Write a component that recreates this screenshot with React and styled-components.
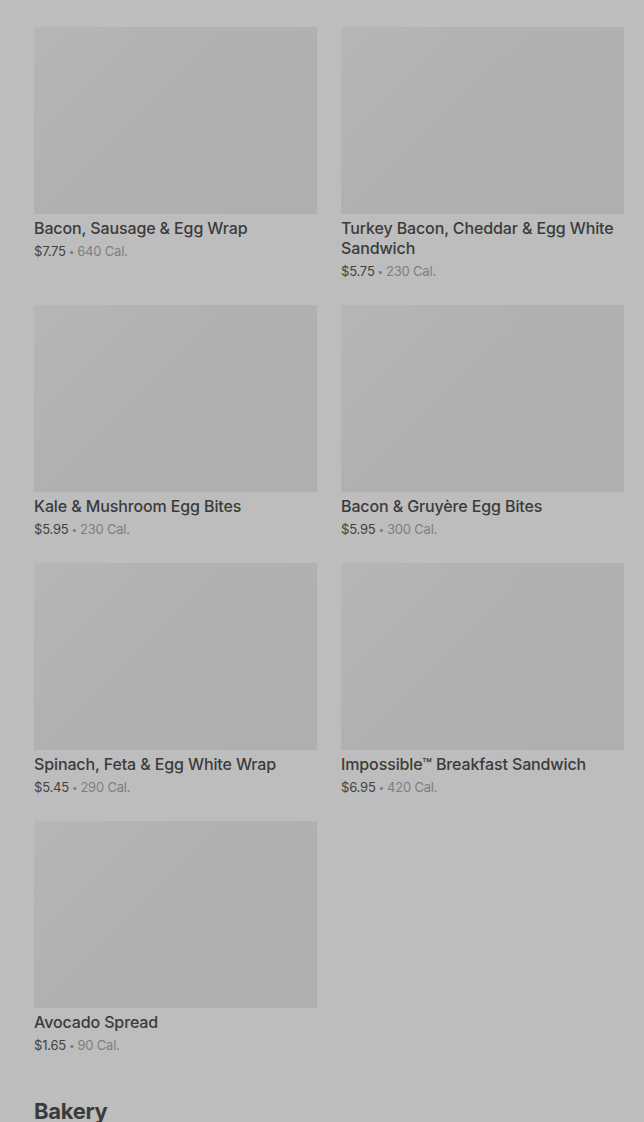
import React from "react";
import styled, { createGlobalStyle } from "styled-components";

const items = [
  { name: "Bacon, Sausage & Egg Wrap", price: "$7.75", cal: "640 Cal." },
  { name: "Turkey Bacon, Cheddar & Egg White Sandwich", price: "$5.75", cal: "230 Cal." },
  { name: "Kale & Mushroom Egg Bites", price: "$5.95", cal: "230 Cal." },
  { name: "Bacon & Gruyère Egg Bites", price: "$5.95", cal: "300 Cal." },
  { name: "Spinach, Feta & Egg White Wrap", price: "$5.45", cal: "290 Cal." },
  { name: "Impossible™ Breakfast Sandwich", price: "$6.95", cal: "420 Cal." },
  { name: "Avocado Spread", price: "$1.65", cal: "90 Cal." },
];

function App() {
  return (
    <Page>
      <GlobalStyle />
      <Grid>
        {items.map((item) => (
          <Card key={item.name}>
            <Thumb />
            <Title>{item.name}</Title>
            <Meta>
              <Price>{item.price}</Price>
              <Dot>•</Dot>
              <Cal>{item.cal}</Cal>
            </Meta>
          </Card>
        ))}
      </Grid>
      <Section>Bakery</Section>
    </Page>
  );
}

const GlobalStyle = createGlobalStyle`
  body {
    margin: 0;
    background: #bdbdbd;
    font-family: Inter, "Liberation Sans", sans-serif;
    overflow: hidden;
  }
`;

const Page = styled.div`
  height: 1122px;
  padding: 27px 20px 0 34px;
  box-sizing: border-box;
  background: #bdbdbd;
`;

const Grid = styled.div`
  display: grid;
  grid-template-columns: 283px 283px;
  column-gap: 24px;
  row-gap: 24px;
  align-items: start;
`;

const Card = styled.div`
  display: flex;
  flex-direction: column;
`;

const Thumb = styled.div`
  height: 187px;
  background: linear-gradient(135deg, #b6b6b6 0%, #b1b1b1 40%, #afafaf 100%);
`;

const Title = styled.div`
  margin-top: 4px;
  font-size: 16px;
  line-height: 20px;
  font-weight: 500;
  letter-spacing: -0.12px;
  color: #3b3b3b;
`;

const Meta = styled.div`
  margin-top: 4px;
  font-size: 13px;
  line-height: 19px;
  letter-spacing: -0.2px;
  display: flex;
  gap: 3px;
  align-items: center;
`;

const Price = styled.span`
  color: #424242;
`;

const Dot = styled.span`
  color: #7e7e7e;
  font-size: 10px;
`;

const Cal = styled.span`
  color: #7e7e7e;
`;

const Section = styled.h2`
  margin: 42px 0 0;
  font-size: 22px;
  line-height: 28px;
  font-weight: 700;
  color: #3b3b3b;
  letter-spacing: -0.3px;
`;

export default App;
